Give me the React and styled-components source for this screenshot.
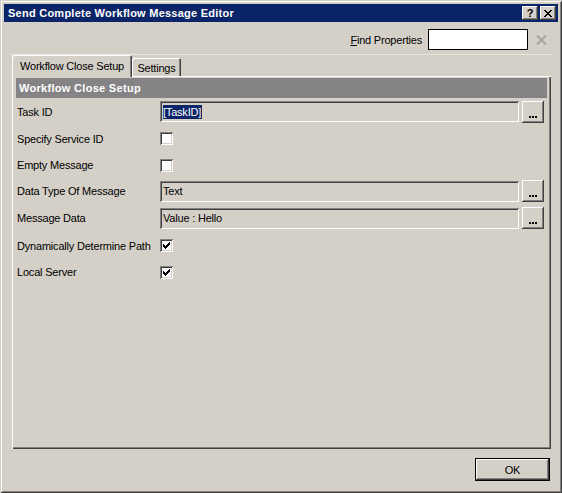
import React from "react";
import styled, { createGlobalStyle } from "styled-components";

const FACE = "#d4d0c8";

const Global = createGlobalStyle`
  html, body { margin: 0; padding: 0; background: ${FACE}; }
  body {
    font-family: "Liberation Sans", Arial, sans-serif;
    font-size: 11px;
    letter-spacing: -0.2px;
    color: #000;
  }
  * { box-sizing: border-box; }
`;

const raised = `
  box-shadow: inset -1px -1px 0 #404040, inset 1px 1px 0 #ffffff,
    inset -2px -2px 0 #808080, inset 2px 2px 0 ${FACE};
`;

const sunken = `
  box-shadow: inset 1px 1px 0 #808080, inset -1px -1px 0 #ffffff,
    inset 2px 2px 0 #404040, inset -2px -2px 0 ${FACE};
`;

const Window = styled.div`
  width: 562px;
  height: 493px;
  background: ${FACE};
  padding: 4px;
  display: flex;
  flex-direction: column;
  box-shadow: inset 1px 1px 0 ${FACE}, inset -1px -1px 0 #404040,
    inset 2px 2px 0 #ffffff, inset -2px -2px 0 #808080;
`;

const TitleBar = styled.div`
  height: 18px;
  flex: none;
  background: #0a246a;
  display: flex;
  align-items: center;
  padding: 0 2px;
`;

const TitleText = styled.div`
  flex: 1;
  color: #fff;
  font-weight: bold;
  font-size: 11px;
  letter-spacing: 0.25px;
  padding-left: 2px;
  white-space: nowrap;
`;

const CaptionButton = styled.div`
  width: 16px;
  height: 14px;
  background: ${FACE};
  ${raised}
  display: flex;
  align-items: center;
  justify-content: center;
  margin-left: ${(p) => p.$gap || 0}px;
  font-weight: bold;
  font-size: 11px;
  line-height: 1;
  color: #000;
`;

const FindRow = styled.div`
  height: 32px;
  flex: none;
  display: flex;
  justify-content: flex-end;
  align-items: flex-start;
  padding: 7px 11px 0 0;
`;

const FindGroup = styled.div`
  height: 21px;
  display: flex;
  align-items: center;
`;

const FindLabel = styled.label`
  margin-right: 6px;
  white-space: nowrap;
`;

const FindInput = styled.div`
  width: 100px;
  height: 21px;
  background: #fff;
  border: 1px solid #000;
`;

const ClearIcon = styled.svg`
  margin-left: 8px;
  display: block;
`;

const Separator = styled.div`
  height: 1px;
  flex: none;
  background: #e9e7e2;
  margin: 0 5px 0 6px;
`;

const TabStrip = styled.div`
  height: 21px;
  flex: none;
  display: flex;
  align-items: flex-end;
  padding-left: 8px;
`;

const Tab = styled.div`
  width: ${(p) => p.$w}px;
  height: ${(p) => (p.$active ? 22 : 18)}px;
  margin-bottom: ${(p) => (p.$active ? -1 : 0)}px;
  position: relative;
  z-index: ${(p) => (p.$active ? 1 : 0)};
  background: ${FACE};
  border-radius: 2px 2px 0 0;
  box-shadow: inset 1px 1px 0 #ffffff, inset -1px 0 0 #404040, inset -2px 0 0 #808080;
  display: flex;
  align-items: center;
  justify-content: center;
  padding-top: ${(p) => (p.$active ? 0 : 1)}px;
  white-space: nowrap;
`;

const Panel = styled.div`
  flex: 1;
  margin: 0 7px 0 8px;
  padding: 2px 4px 0 4px;
  box-shadow: inset 1px 1px 0 #ffffff, inset -1px -1px 0 #404040, inset -2px -2px 0 #808080;
  display: flex;
  flex-direction: column;
`;

const GroupHeader = styled.div`
  height: 20px;
  background: #858385;
  color: #fff;
  font-weight: bold;
  letter-spacing: 0.3px;
  padding-left: 3px;
  display: flex;
  align-items: center;
`;

const PropRow = styled.div`
  height: ${(p) => p.$h}px;
  display: flex;
  align-items: center;
`;

const PropLabel = styled.div`
  width: 144px;
  flex: none;
  padding-left: 1px;
  white-space: nowrap;
`;

const ValueCell = styled.div`
  flex: 1;
  display: flex;
  align-items: center;
  gap: 3px;
  padding-right: 3px;
`;

const TextBox = styled.div`
  flex: 1;
  height: 21px;
  ${sunken}
  padding-left: 3px;
  display: flex;
  align-items: center;
  white-space: nowrap;
  overflow: hidden;
`;

const Selected = styled.span`
  background: #0a246a;
  color: #fff;
  line-height: 14px;
  padding-right: 1px;
`;

const EllipsisButton = styled.div`
  width: 22px;
  height: 22px;
  flex: none;
  background: ${FACE};
  ${raised}
  display: flex;
  align-items: flex-end;
  justify-content: center;
  gap: 1px;
  padding-bottom: 5px;
`;

const Dot = styled.span`
  width: 2px;
  height: 2px;
  background: #000;
`;

const CheckBox = styled.div`
  width: 13px;
  height: 13px;
  background: #fff;
  ${sunken}
  display: flex;
  align-items: center;
  justify-content: center;
`;

const Footer = styled.div`
  height: 40px;
  flex: none;
  display: flex;
  justify-content: flex-end;
  align-items: flex-start;
  padding: 9px 8px 0 0;
`;

const OkButton = styled.div`
  width: 75px;
  height: 23px;
  border: 1px solid #000;
  background: ${FACE};
  ${raised}
  display: flex;
  align-items: center;
  justify-content: center;
`;

const CheckMark = () => (
  <svg width="7" height="7" viewBox="0 0 7 7" shapeRendering="crispEdges">
    <rect x="0" y="2" width="1" height="3" fill="#000" />
    <rect x="1" y="3" width="1" height="3" fill="#000" />
    <rect x="2" y="4" width="1" height="3" fill="#000" />
    <rect x="3" y="3" width="1" height="3" fill="#000" />
    <rect x="4" y="2" width="1" height="3" fill="#000" />
    <rect x="5" y="1" width="1" height="3" fill="#000" />
    <rect x="6" y="0" width="1" height="3" fill="#000" />
  </svg>
);

const CloseGlyph = () => (
  <svg width="8" height="7" viewBox="0 0 8 7" shapeRendering="crispEdges">
    <rect x="0" y="0" width="2" height="1" fill="#000" />
    <rect x="6" y="0" width="2" height="1" fill="#000" />
    <rect x="1" y="1" width="2" height="1" fill="#000" />
    <rect x="5" y="1" width="2" height="1" fill="#000" />
    <rect x="2" y="2" width="4" height="1" fill="#000" />
    <rect x="3" y="3" width="2" height="1" fill="#000" />
    <rect x="2" y="4" width="4" height="1" fill="#000" />
    <rect x="1" y="5" width="2" height="1" fill="#000" />
    <rect x="5" y="5" width="2" height="1" fill="#000" />
    <rect x="0" y="6" width="2" height="1" fill="#000" />
    <rect x="6" y="6" width="2" height="1" fill="#000" />
  </svg>
);

const Ellipsis = () => (
  <EllipsisButton>
    <Dot />
    <Dot />
    <Dot />
  </EllipsisButton>
);

const rows = [
  { label: "Task ID", h: 27, type: "text", value: "[TaskID]", selected: true },
  { label: "Specify Service ID", h: 27, type: "check", checked: false },
  { label: "Empty Message", h: 26, type: "check", checked: false },
  { label: "Data Type Of Message", h: 26, type: "text", value: "Text" },
  { label: "Message Data", h: 28, type: "text", value: "Value : Hello" },
  { label: "Dynamically Determine Path", h: 27, type: "check", checked: true },
  { label: "Local Server", h: 26, type: "check", checked: true },
];

export default function App() {
  return (
    <>
      <Global />
      <Window>
        <TitleBar>
          <TitleText>Send Complete Workflow Message Editor</TitleText>
          <CaptionButton>?</CaptionButton>
          <CaptionButton $gap={2}>
            <CloseGlyph />
          </CaptionButton>
        </TitleBar>
        <FindRow>
          <FindGroup>
            <FindLabel>
              <u>F</u>ind Properties
            </FindLabel>
            <FindInput />
            <ClearIcon width="11" height="10" viewBox="0 0 11 10">
              <path d="M1 0.5 L10 9.5 M10 0.5 L1 9.5" stroke="#a7a5a2" strokeWidth="2" />
            </ClearIcon>
          </FindGroup>
        </FindRow>
        <Separator />
        <TabStrip>
          <Tab $active $w={120}>Workflow Close Setup</Tab>
          <Tab $w={49}>Settings</Tab>
        </TabStrip>
        <Panel>
          <GroupHeader>Workflow Close Setup</GroupHeader>
          {rows.map((r) => (
            <PropRow key={r.label} $h={r.h}>
              <PropLabel>{r.label}</PropLabel>
              <ValueCell>
                {r.type === "text" ? (
                  <>
                    <TextBox>
                      {r.selected ? <Selected>{r.value}</Selected> : r.value}
                    </TextBox>
                    <Ellipsis />
                  </>
                ) : (
                  <CheckBox>{r.checked && <CheckMark />}</CheckBox>
                )}
              </ValueCell>
            </PropRow>
          ))}
        </Panel>
        <Footer>
          <OkButton>OK</OkButton>
        </Footer>
      </Window>
    </>
  );
}
